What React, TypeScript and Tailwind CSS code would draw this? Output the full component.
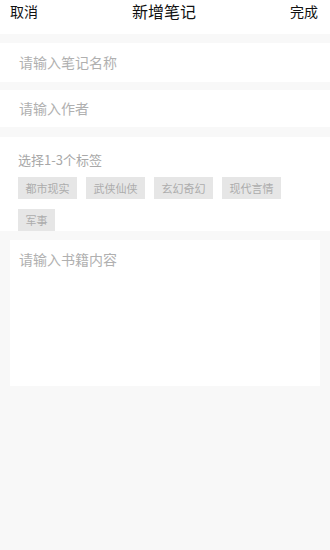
import React from 'react';

const tags = ['都市现实', '武侠仙侠', '玄幻奇幻', '现代言情', '军事'];

const font = { fontFamily: '"Noto Sans CJK SC", "Noto Sans", sans-serif' };

const App: React.FC = () => {
  return (
    <div className="min-h-[550px] w-[330px] bg-[#f8f8f8]" style={font}>
      <div className="flex h-[34px] items-start justify-between bg-white pl-[10px] pr-[12px] pt-[1px] text-[14px] text-[#111]">
        <span className="leading-[20px]">取消</span>
        <span className="text-[16px] leading-[20px]">新增笔记</span>
        <span className="leading-[20px]">完成</span>
      </div>

      <div className="mt-[9px] flex h-[39px] items-center bg-white px-[19px] text-[14px] text-[#b0b0b0]">
        请输入笔记名称
      </div>

      <div className="mt-[8px] flex h-[37px] items-center bg-white px-[19px] text-[14px] text-[#b0b0b0]">
        请输入作者
      </div>

      <div className="mt-[10px] bg-white px-[18px] pt-[14px]">
        <div className="text-[13px] leading-[18px] text-[#a8a8a8]">选择1-3个标签</div>
        <div className="mt-[8px] flex flex-wrap gap-x-[9px] gap-y-[10px]">
          {tags.map((tag) => (
            <span
              key={tag}
              className="flex h-[22px] items-center bg-[#e6e6e6] px-[7.5px] text-[11px] text-[#acacac]"
            >
              {tag}
            </span>
          ))}
        </div>
      </div>

      <div className="mx-[10px] mt-[9px] h-[146px] bg-white px-[9px] pt-[9px] text-[14px] leading-[20px] text-[#b0b0b0]">
        请输入书籍内容
      </div>
    </div>
  );
};

export default App;
